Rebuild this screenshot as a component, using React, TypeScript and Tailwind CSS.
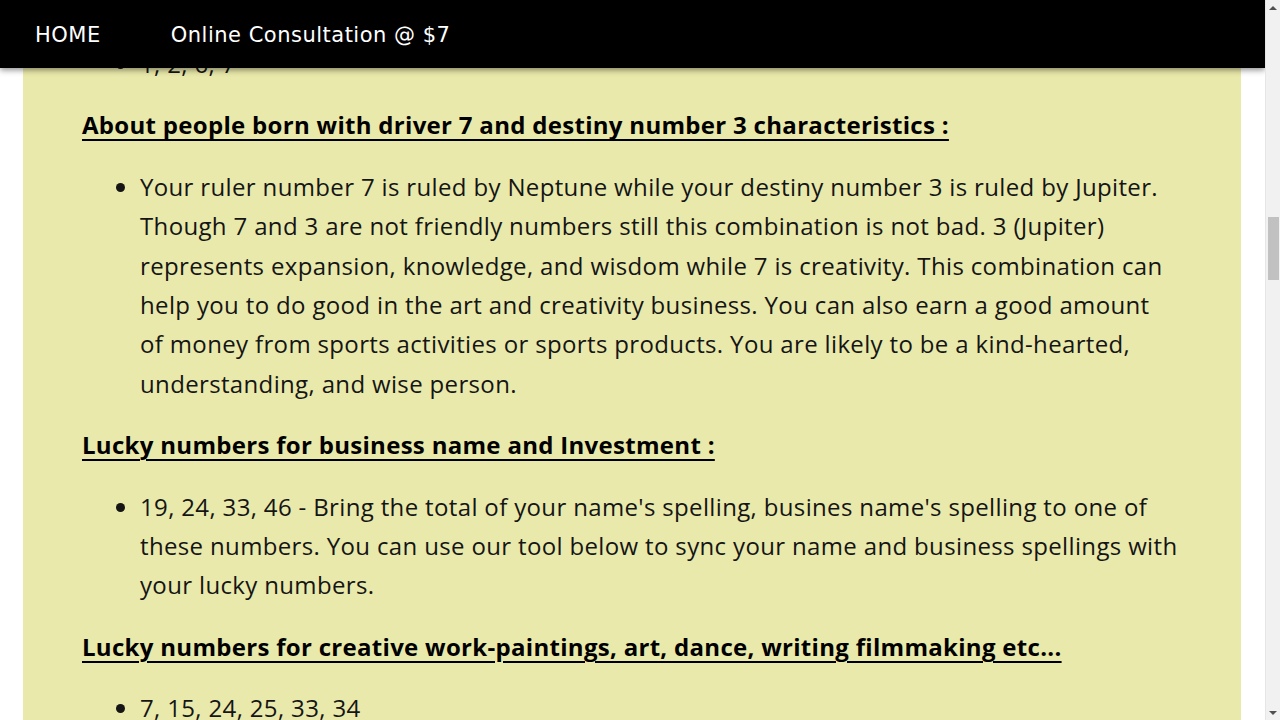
import React from "react";

const font = { fontFamily: '"Open Sans", "Noto Sans", sans-serif' };

function Heading({ children }: { children: React.ReactNode }) {
  return (
    <h3 className="my-[22px] text-[24px] font-bold leading-[39.4px] tracking-[0.3px] text-black underline decoration-2 underline-offset-[5px]">
      {children}
    </h3>
  );
}

function Bullets({ items }: { items: string[] }) {
  return (
    <ul className="my-[22px] list-disc pl-[58px] pr-[3.5px] text-[24px] leading-[39.4px] tracking-[0.35px] text-[#151515]">
      {items.map((t, i) => (
        <li key={i}>{t}</li>
      ))}
    </ul>
  );
}

function Scrollbar() {
  return (
    <div className="flex h-full w-[15px] flex-col items-center border-l border-[#e6e6e6] bg-[#f1f1f1]">
      <div className="flex h-[15px] items-center justify-center">
        <div className="h-0 w-0 border-x-[4px] border-b-[4px] border-x-transparent border-b-[#505050]" />
      </div>
      <div className="mt-[202px] h-[63px] w-[11px] bg-[#c1c1c1]" />
      <div className="flex-1" />
      <div className="flex h-[15px] items-center justify-center">
        <div className="h-0 w-0 border-x-[4px] border-t-[4px] border-x-transparent border-t-[#505050]" />
      </div>
    </div>
  );
}

export default function App() {
  return (
    <div className="flex h-screen w-full overflow-hidden bg-white" style={font}>
      <div className="relative flex-1 overflow-hidden">
        <header className="absolute inset-x-0 top-0 z-10 flex h-[68px] items-center bg-black pt-[4px] text-[21px] tracking-[0.5px] text-white shadow-[0_2px_6px_rgba(0,0,0,0.45)] font-['DejaVu_Sans',sans-serif]">
          <a className="ml-[35px]">HOME</a>
          <a className="ml-[70px]">Online Consultation @ $7</a>
        </header>

        <main className="ml-[23px] mr-[24px] mt-[-23px] bg-[#e9e9ab] px-[59px] pb-10">
          <ul className="mb-[22px] list-disc pl-[58px] pt-[67px] text-[24px] leading-[39.4px] tracking-[0.35px] text-[#151515]">
            <li>1, 2, 6, 7</li>
          </ul>

          <Heading>About people born with driver 7 and destiny number 3 characteristics :</Heading>
          <Bullets
            items={[
              "Your ruler number 7 is ruled by Neptune while your destiny number 3 is ruled by Jupiter. Though 7 and 3 are not friendly numbers still this combination is not bad. 3 (Jupiter) represents expansion, knowledge, and wisdom while 7 is creativity. This combination can help you to do good in the art and creativity business. You can also earn a good amount of money from sports activities or sports products. You are likely to be a kind-hearted, understanding, and wise person.",
            ]}
          />

          <Heading>Lucky numbers for business name and Investment :</Heading>
          <Bullets
            items={[
              "19, 24, 33, 46 - Bring the total of your name's spelling, busines name's spelling to one of these numbers. You can use our tool below to sync your name and business spellings with your lucky numbers.",
            ]}
          />

          <Heading>Lucky numbers for creative work-paintings, art, dance, writing filmmaking etc...</Heading>
          <Bullets items={["7, 15, 24, 25, 33, 34"]} />
        </main>
      </div>
      <Scrollbar />
    </div>
  );
}
